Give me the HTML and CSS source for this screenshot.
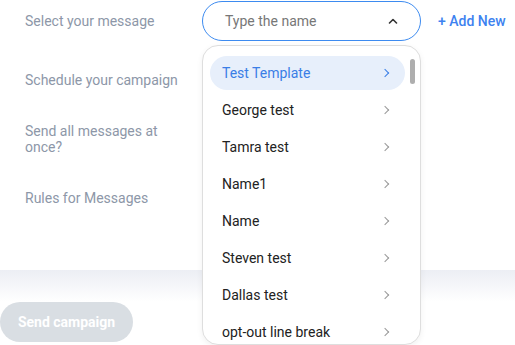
FILE: index.html
```html
<!DOCTYPE html>
<html lang="en">
<head>
    <meta charset="UTF-8">
    <title>Campaign - Select message</title>
    <link rel="stylesheet" href="styles.css">
</head>
<body>
    <div class="card">
        <div class="form">
            <div class="row">
                <label class="label">Select your message</label>
                <div class="field">
                    <div class="select">
                        <span class="placeholder">Type the name</span>
                        <svg class="caret" width="10" height="6" viewBox="0 0 10 6"><path d="M1.5 5 L5 1.5 L8.5 5" fill="none" stroke="#333" stroke-width="1.6" stroke-linecap="round" stroke-linejoin="round"/></svg>
                    </div>
                    <a class="add-new" href="#">+ Add New</a>

                    <div class="menu">
                        <ul class="menu-list">
                            <li class="menu-item active">Test Template <span class="chev"></span></li>
                            <li class="menu-item">George test <span class="chev"></span></li>
                            <li class="menu-item">Tamra test <span class="chev"></span></li>
                            <li class="menu-item">Name1 <span class="chev"></span></li>
                            <li class="menu-item">Name <span class="chev"></span></li>
                            <li class="menu-item">Steven test <span class="chev"></span></li>
                            <li class="menu-item">Dallas test <span class="chev"></span></li>
                            <li class="menu-item">opt-out line break <span class="chev"></span></li>
                        </ul>
                        <div class="scroll-thumb"></div>
                    </div>
                </div>
            </div>
            <div class="row">
                <label class="label">Schedule your campaign</label>
            </div>
            <div class="row">
                <label class="label">Send all messages at once?</label>
            </div>
            <div class="row">
                <label class="label">Rules for Messages</label>
            </div>
        </div>
    </div>

    <div class="footer">
        <button class="btn" disabled>Send campaign</button>
    </div>
</body>
</html>
```

FILE: styles.css
```css
* { margin: 0; padding: 0; box-sizing: border-box; }
body {
    font-family: Roboto, 'Liberation Sans', sans-serif;
    background-color: #fff;
    width: 515px;
    height: 345px;
    overflow: hidden;
}
.card {
    height: 270px;
    background: #fff;
}
.form {
    display: flex;
    flex-direction: column;
    gap: 19px;
    padding-top: 1px;
}
.row {
    display: flex;
    align-items: center;
    height: 40px;
}
.label {
    width: 202px;
    padding-left: 25px;
    padding-right: 20px;
    font-size: 14px;
    line-height: 16px;
    color: #8d97a8;
}
.field {
    position: relative;
    display: flex;
    align-items: center;
    gap: 17px;
}
.select {
    width: 219px;
    height: 40px;
    border: 1px solid #3d8bf0;
    border-radius: 20px;
    display: flex;
    align-items: center;
    justify-content: space-between;
    padding: 0 22px 0 22px;
}
.placeholder {
    font-size: 14px;
    color: #777;
}
.add-new {
    font-size: 14px;
    font-weight: 500;
    color: #3d82f0;
    text-decoration: none;
}
.menu {
    position: absolute;
    top: 44px;
    left: 0;
    width: 219px;
    height: 300px;
    background: #fff;
    border: 1px solid #dedede;
    border-radius: 16px;
    box-shadow: 0 2px 6px rgba(0, 0, 0, 0.06);
    padding: 10px 15px 0 7px;
    z-index: 5;
}
.menu-list {
    list-style: none;
    display: flex;
    flex-direction: column;
    gap: 3px;
}
.menu-item {
    height: 34px;
    border-radius: 17px;
    display: flex;
    align-items: center;
    justify-content: space-between;
    padding: 0 17px 0 12px;
    font-size: 14px;
    color: #222;
}
.menu-item.active {
    background-color: #e7effb;
    color: #3a7ee6;
}
.chev {
    width: 6px;
    height: 6px;
    border-top: 1.4px solid #999;
    border-right: 1.4px solid #999;
    transform: rotate(45deg);
}
.menu-item.active .chev {
    border-color: #3a7ee6;
}
.scroll-thumb {
    position: absolute;
    top: 13px;
    right: 5px;
    width: 5px;
    height: 25px;
    border-radius: 3px;
    background: #aeaeae;
}
.footer {
    height: 75px;
    background: linear-gradient(#eceef4, #fff 32px);
    padding-top: 32px;
}
.btn {
    width: 133px;
    height: 40px;
    border: none;
    border-radius: 20px;
    background-color: #d9dee3;
    color: #fff;
    font-family: Roboto, 'Liberation Sans', sans-serif;
    font-size: 14px;
    font-weight: 700;
}
```
